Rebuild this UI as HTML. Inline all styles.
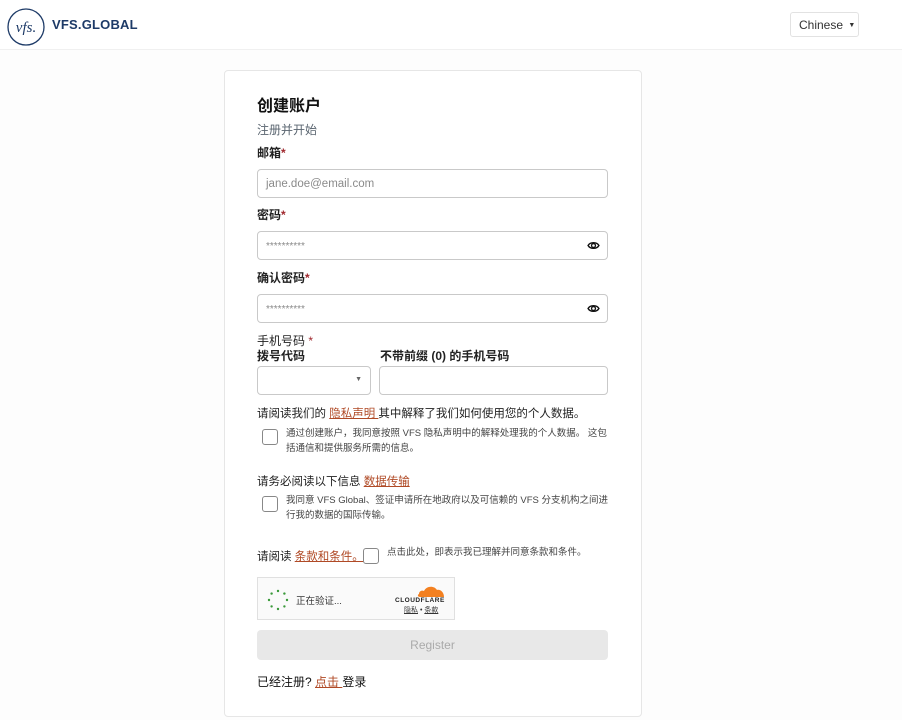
<!DOCTYPE html>
<html><head><meta charset="utf-8"><style>
*{box-sizing:border-box;margin:0;padding:0}
body{width:902px;height:720px;background:#fdfdfd;font-family:"Liberation Sans","Noto Sans CJK SC",sans-serif;color:#222;position:relative;overflow:hidden}
.a{position:absolute}
.hdr{left:0;top:0;width:902px;height:50px;background:#fff;border-bottom:1px solid #f0f0f0}
.card{left:224px;top:70px;width:418px;height:647px;background:#fff;border:1px solid #e6e6e6;border-radius:4px}
.lbl{font-size:12px;color:#222;font-weight:bold;line-height:14px}
.req{color:#a0282e}
.inp{border:1px solid #c9c9c9;border-radius:4px;background:#fff;height:29px}
.ph{font-size:11.5px;color:#8a8a8a;position:absolute;left:8px;top:8px}
.lnk{color:#b04a26;text-decoration:underline}
.cb{width:16px;height:16px;border:1px solid #888;border-radius:3px;background:#fff}
.sm{font-size:9.5px;color:#444;line-height:15px}
.eye{right:7px;top:7px}
</style></head><body>
<div class="a hdr">
 <svg class="a" style="left:7px;top:8px" width="38" height="38" viewBox="0 0 38 38"><circle cx="19" cy="19" r="18" fill="none" stroke="#1d3a67" stroke-width="1.3"/><text x="19" y="24" text-anchor="middle" font-family="Liberation Serif,serif" font-style="italic" font-size="15" fill="#1d3a67">vfs.</text></svg>
 <div class="a" style="left:52px;top:17px;font-size:13px;font-weight:bold;color:#1d3a67;letter-spacing:0.2px">VFS.GLOBAL</div>
 <div class="a" style="left:790px;top:12px;width:69px;height:25px;border:1px solid #e2e2e2;border-radius:3px;font-size:12px;color:#333;padding:5px 0 0 8px">Chinese <span style="font-size:7px;margin-left:2px;vertical-align:2px">▼</span></div>
</div>
<div class="a card"></div>
<div class="a" style="left:257px;top:97px;font-size:16px;font-weight:bold;color:#111;line-height:20px">创建账户</div>
<div class="a" style="left:257px;top:123px;font-size:12px;color:#5a6570;line-height:15px">注册并开始</div>
<div class="a lbl" style="left:257px;top:146px">邮箱<span class="req">*</span></div>
<div class="a inp" style="left:257px;top:169px;width:351px"><span class="ph">jane.doe@email.com</span></div>
<div class="a lbl" style="left:257px;top:208px">密码<span class="req">*</span></div>
<div class="a inp" style="left:257px;top:231px;width:351px"><span class="ph" style="top:9px;font-size:10px">**********</span>
<svg class="a eye" width="13" height="13" viewBox="0 0 12 12"><path d="M1 6C3 2.5 9 2.5 11 6 9 9.5 3 9.5 1 6Z" fill="none" stroke="#111" stroke-width="1.3"/><circle cx="6" cy="6" r="1.8" fill="none" stroke="#111" stroke-width="1.2"/></svg></div>
<div class="a lbl" style="left:257px;top:271px">确认密码<span class="req">*</span></div>
<div class="a inp" style="left:257px;top:294px;width:351px"><span class="ph" style="top:9px;font-size:10px">**********</span>
<svg class="a eye" width="13" height="13" viewBox="0 0 12 12"><path d="M1 6C3 2.5 9 2.5 11 6 9 9.5 3 9.5 1 6Z" fill="none" stroke="#111" stroke-width="1.3"/><circle cx="6" cy="6" r="1.8" fill="none" stroke="#111" stroke-width="1.2"/></svg></div>
<div class="a lbl" style="left:257px;top:334px;font-weight:normal">手机号码 <span class="req">*</span></div>
<div class="a lbl" style="left:257px;top:349px">拨号代码</div>
<div class="a lbl" style="left:380px;top:349px">不带前缀 (0) 的手机号码</div>
<div class="a inp" style="left:257px;top:366px;width:114px"><span class="a" style="right:8px;top:9px;font-size:7px;color:#666">▼</span></div>
<div class="a inp" style="left:379px;top:366px;width:229px"></div>
<div class="a" style="left:257px;top:405px;font-size:11.5px">请阅读我们的 <span class="lnk">隐私声明 </span>其中解释了我们如何使用您的个人数据。</div>
<div class="a cb" style="left:262px;top:429px"></div>
<div class="a sm" style="left:286px;top:426px;width:322px">通过创建账户，我同意按照 VFS 隐私声明中的解释处理我的个人数据。 这包括通信和提供服务所需的信息。</div>
<div class="a" style="left:257px;top:473px;font-size:11.5px">请务必阅读以下信息 <span class="lnk">数据传输</span></div>
<div class="a cb" style="left:262px;top:496px"></div>
<div class="a sm" style="left:286px;top:493px;width:325px">我同意 VFS Global、签证申请所在地政府以及可信赖的 VFS 分支机构之间进行我的数据的国际传输。</div>
<div class="a" style="left:257px;top:548px;font-size:11.5px">请阅读 <span class="lnk">条款和条件。 </span></div>
<div class="a cb" style="left:363px;top:548px"></div>
<div class="a sm" style="left:387px;top:545px">点击此处，即表示我已理解并同意条款和条件。</div>
<div class="a" style="left:257px;top:577px;width:198px;height:43px;background:#fafafa;border:1px solid #e0e0e0">
 <svg class="a" style="left:9px;top:11px" width="22" height="22" viewBox="0 0 22 22" fill="#3a9a3a"><circle cx="11" cy="2" r="1.2"/><circle cx="17.4" cy="4.6" r="1.2"/><circle cx="20" cy="11" r="1.2"/><circle cx="17.4" cy="17.4" r="1.2"/><circle cx="11" cy="20" r="1.2"/><circle cx="4.6" cy="17.4" r="1.2"/><circle cx="2" cy="11" r="1.2"/><circle cx="4.6" cy="4.6" r="1.2"/></svg>
 <div class="a" style="left:38px;top:15px;font-size:9.5px;color:#333">正在验证...</div>
 <svg class="a" style="left:158px;top:6px" width="30" height="14" viewBox="0 0 30 14"><path d="M4 13C2 13 1 11 3 10 3 7 6 6 8 7 10 2 18 1 21 6 24 5 28 8 28 13Z" fill="#f38020"/></svg>
 <div class="a" style="left:137px;top:19px;font-size:6.5px;font-weight:bold;letter-spacing:0.5px;color:#222">CLOUDFLARE</div>
 <div class="a" style="left:146px;top:27px;font-size:7px;color:#333"><u>隐私</u> • <u>条款</u></div>
</div>
<div class="a" style="left:257px;top:630px;width:351px;height:30px;background:#e8e8e8;border-radius:4px;text-align:center;font-size:12px;color:#aaa;line-height:30px">Register</div>
<div class="a" style="left:257px;top:673px;font-size:12px;color:#111">已经注册? <span class="lnk"> 点击 </span> 登录</div>
</body></html>
